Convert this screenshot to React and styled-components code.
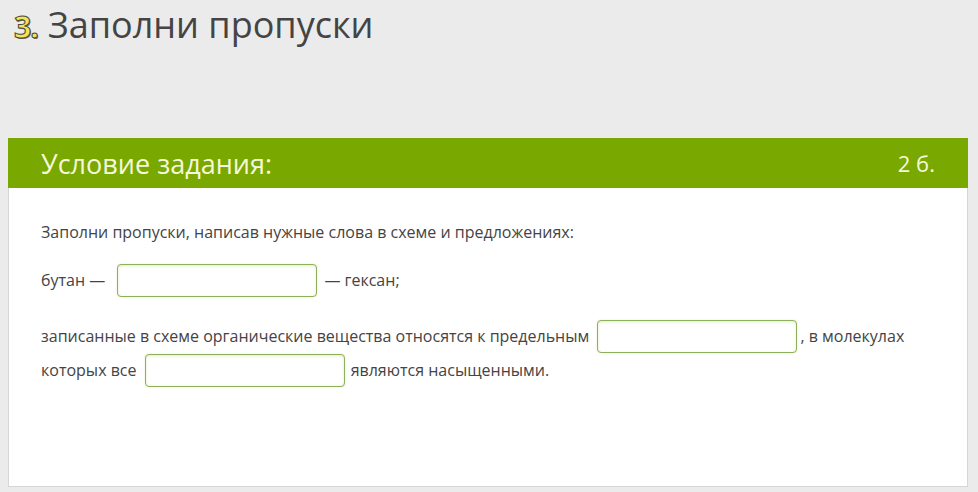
import styled, { createGlobalStyle } from "styled-components";

const GlobalStyle = createGlobalStyle`
  html, body {
    margin: 0;
    padding: 0;
    background: #ebebeb;
    font-family: "Open Sans", "Liberation Sans", sans-serif;
    color: #444;
  }
`;

function App() {
  return (
    <>
      <GlobalStyle />
      <Page>
        <Title>
          <Num>3.</Num>Заполни пропуски
        </Title>
        <Card>
          <CardHeader>
            <HeaderTitle>Условие задания:</HeaderTitle>
            <Points>2 б.</Points>
          </CardHeader>
          <CardBody>
            <Para $after={14}>
              Заполни пропуски, написав нужные слова в схеме и предложениях:
            </Para>
            <Para $after={22}>
              бутан — <Blank $left={8} $right={7} />— гексан;
            </Para>
            <Para>
              записанные в схеме органические вещества относятся к предельным{" "}
              <Blank $left={4} $right={3} />, в молекулах которых все{" "}
              <Blank $left={4} $right={6} />являются насыщенными.
            </Para>
          </CardBody>
        </Card>
      </Page>
    </>
  );
}

export default App;

const Page = styled.div`
  padding: 0 10px 6px 8px;
`;

const Title = styled.h1`
  margin: 0 0 87px;
  padding-left: 6px;
  font-size: 36px;
  font-weight: 400;
  line-height: 49px;
  color: #444;
  display: flex;
  align-items: baseline;
`;

const Num = styled.span`
  font-size: 30px;
  font-weight: 700;
  color: #f2e35c;
  margin-right: 10px;
  letter-spacing: -1px;
  -webkit-text-stroke: 1px #4a4a3a;
  text-shadow: 1px 1px 0 #6a6a55;
`;

const Card = styled.div`
  background: #fff;
  border: 1px solid #d6d6d6;
  border-top: none;
  height: 349px;
  box-sizing: border-box;
`;

const CardHeader = styled.div`
  height: 50px;
  margin: 0 -1px;
  background: #79a800;
  display: flex;
  align-items: center;
  justify-content: space-between;
  padding: 0 33px 0 33px;
  color: #f6f8dc;
`;

const HeaderTitle = styled.div`
  font-size: 27px;
  line-height: 1;
`;

const Points = styled.div`
  font-size: 22px;
  line-height: 1;
`;

const CardBody = styled.div`
  padding: 27px 40px 0 32px;
  font-size: 16px;
`;

const Para = styled.p`
  margin: 0 0 ${(p) => p.$after || 0}px;
  line-height: 34px;
`;

const Blank = styled.input.attrs({ type: "text" })`
  display: inline-block;
  vertical-align: middle;
  box-sizing: border-box;
  width: 200px;
  height: 33px;
  margin: -3px ${(p) => p.$right}px 0 ${(p) => p.$left}px;
  border: 1px solid #8db05a;
  border-radius: 4px;
  background: #fff;
  box-shadow: inset 0 1px 3px rgba(150, 170, 60, 0.25),
    0 0 2px rgba(210, 230, 150, 0.6);
  outline: none;
`;
